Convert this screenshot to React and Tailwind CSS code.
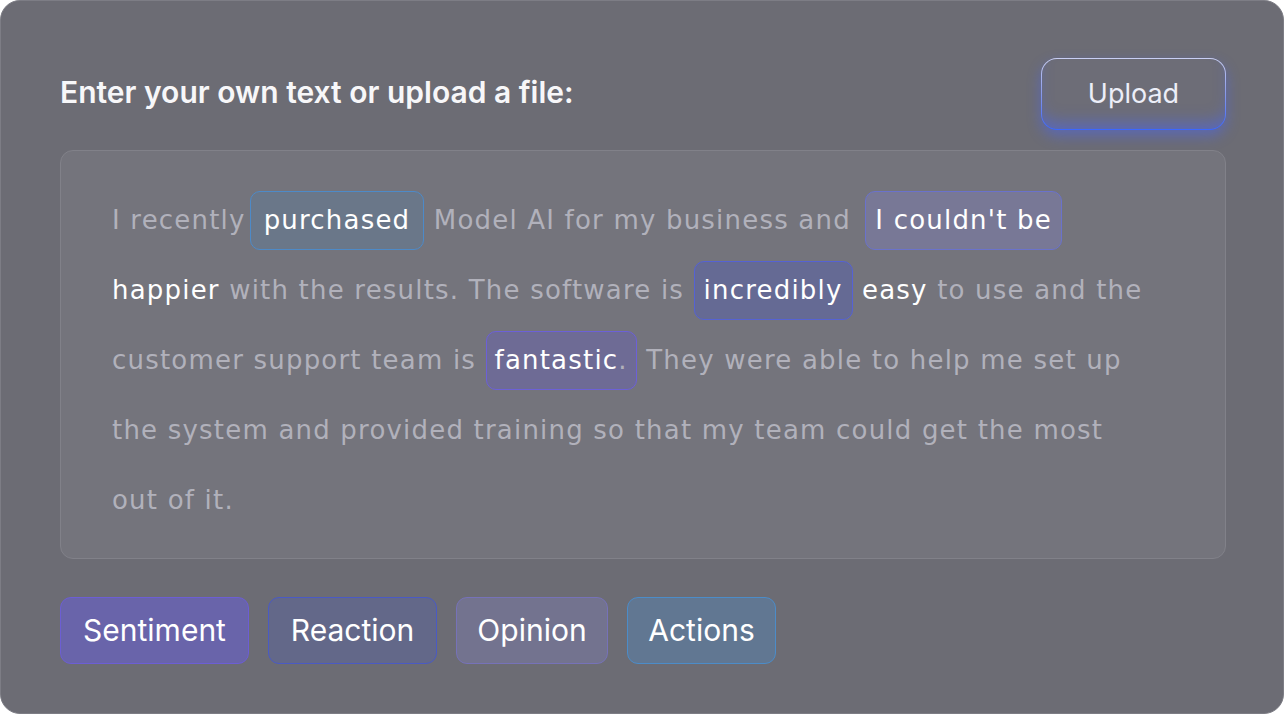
import React from "react";

const body = "[font-family:'DejaVu_Sans','Open_Sans',sans-serif]";

function Chip({ children, cls }) {
  return (
    <span
      className={`inline-block rounded-[10px] border px-[13px] leading-[57px] text-white ${cls}`}
    >
      {children}
    </span>
  );
}

export default function App() {
  return (
    <div className="w-[1284px] h-[714px] bg-white">
      <div className="h-full rounded-[20px] border border-[#7d7d85] bg-[#6c6c74] pt-[57px] pl-[59px] pr-[57px] flex flex-col [font-family:Inter,sans-serif]">
        <div className="flex items-center justify-between">
          <h1 className="text-[30px] font-semibold text-[#f7f7f9] tracking-[0px] -mt-[3px]">
            Enter your own text or upload a file:
          </h1>
          <button className="w-[185px] h-[72px] rounded-[16px] border border-transparent text-[27px] text-[#eceef8] [background:linear-gradient(#6d6d77,#6d6d77)_padding-box,linear-gradient(to_bottom,#c9cff5,#8f9ee8_45%,#3a66ff)_border-box] shadow-[inset_0_-12px_16px_-6px_rgba(70,100,255,0.5),0_6px_14px_rgba(70,100,255,0.45)]">
            Upload
          </button>
        </div>

        <div className="mt-[20px] h-[409px] rounded-[13px] border border-[#818189] bg-[#74747c] pl-[51px] pt-[34px]">
          <p className={`${body} text-[26px] tracking-[1.2px] leading-[70px] text-[#b1b1bb] whitespace-nowrap`}>
            I recently
            <Chip cls="ml-[4px] bg-[#6a7789] border-[#4d8ac8]">purchased</Chip> Model AI
            for my business and{" "}
            <Chip cls="ml-[5px] bg-[#787896] border-[#6a72cc] !px-[9px]">I couldn't be</Chip>
            <br />
            <span className="text-white">happier</span> with the results. The
            software is{" "}
            <Chip cls="bg-[#656a94] border-[#5562d4] !px-[9px]">incredibly</Chip>{" "}
            <span className="text-white">easy</span> to use and the
            <br />
            customer support team is{" "}
            <Chip cls="bg-[#6e6b95] border-[#6c60d8] !px-[8px]">
              fantastic<span className="text-[#b1b1bb]">.</span>
            </Chip>{" "}
            They were able to help me set up
            <br />
            the system and provided training so that my team could get the most
            <br />
            out of it.
          </p>
        </div>

        <div className="mt-[38px] flex gap-[19px] text-[30px] text-white">
          <button className="w-[189px] h-[67px] rounded-[11px] border border-[#6c5ed4] bg-[#6964aa]">
            Sentiment
          </button>
          <button className="w-[169px] h-[67px] rounded-[11px] border border-[#4a5ac4] bg-[#636889]">
            Reaction
          </button>
          <button className="w-[152px] h-[67px] rounded-[11px] border border-[#7672b8] bg-[#73738f]">
            Opinion
          </button>
          <button className="w-[149px] h-[67px] rounded-[11px] border border-[#4c8cc8] bg-[#617792]">
            Actions
          </button>
        </div>
      </div>
    </div>
  );
}
